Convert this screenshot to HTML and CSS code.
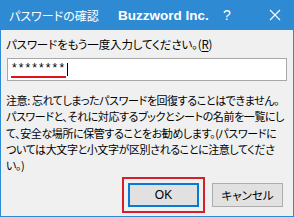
FILE: index.html
```html
<!DOCTYPE html>
<html lang="ja">
<head>
<meta charset="utf-8">
<title>パスワードの確認</title>
<link rel="stylesheet" href="styles.css">
</head>
<body>
<div class="window">
  <div class="titlebar">
    <span class="title">パスワードの確認</span>
    <span class="app">Buzzword Inc.</span>
    <span class="help">?</span>
    <span class="close">
      <svg width="12" height="12" viewBox="0 0 12 12"><path d="M1 1 L11 11 M11 1 L1 11" stroke="#fff" stroke-width="1.1" fill="none"/></svg>
    </span>
  </div>
  <div class="content">
    <div class="label">パスワードをもう一度入力してください。(<u>R</u>)</div>
    <div class="input">
      <span class="mask">********</span><span class="caret"></span>
    </div>
    <p class="note">注意: 忘れてしまったパスワードを回復することはできません。<br>パスワードと、それに対応するブックとシートの名前を一覧にし<br>て、安全な場所に保管することをお勧めします。(パスワードに<br>ついては大文字と小文字が区別されることに注意してくださ<br>い。)</p>
    <div class="buttons">
      <div class="focus-ring"><button class="btn btn-ok">OK</button></div>
      <button class="btn btn-cancel">キャンセル</button>
    </div>
  </div>
</div>
</body>
</html>
```
FILE: styles.css
```css
html, body {
  margin: 0;
  padding: 0;
  background: #f0f0f0;
}
.window {
  width: 294px;
  height: 217px;
  box-sizing: border-box;
  border: 1px solid #2f8ad4;
  border-top: 0;
  background: #f0f0f0;
  display: flex;
  flex-direction: column;
  font-family: "Noto Sans CJK JP", sans-serif;
  font-feature-settings: "palt";
  color: #000;
  overflow: hidden;
}
.titlebar {
  height: 30px;
  flex: none;
  background: #2f8ad4;
  color: #fff;
  display: flex;
  align-items: center;
}
.title {
  margin-left: 8px;
  font-size: 12px;
  width: 109px;
  white-space: nowrap;
}
.app {
  font-family: "Liberation Sans", Arial, sans-serif;
  font-weight: bold;
  font-size: 13.5px;
  width: 105px;
  white-space: nowrap;
}
.help {
  font-family: "Liberation Sans", Arial, sans-serif;
  font-size: 14px;
  width: 46px;
}
.close {
  display: flex;
  align-items: center;
}
.content {
  flex: 1;
  display: flex;
  flex-direction: column;
  padding: 6px 6px 0 5px;
}
.label {
  font-size: 11.5px;
  letter-spacing: -0.15px;
  line-height: 16px;
  white-space: nowrap;
}
.label u {
  text-underline-offset: 2px;
}
.input {
  margin: 6px 0 0 1px;
  height: 23px;
  box-sizing: border-box;
  border: 1px solid #a8a8a8;
  background: #fff;
  display: flex;
  align-items: center;
  padding-left: 3px;
}
.mask {
  font-family: "Liberation Sans", Arial, sans-serif;
  font-size: 12px;
  letter-spacing: 2.1px;
  line-height: 14px;
  height: 15px;
  border-bottom: 2px solid #e0141e;
  padding-left: 1px;
}
.caret {
  width: 1px;
  height: 13px;
  background: #000;
  margin-left: 1px;
}
.note {
  margin: 11px 0 0 0;
  font-size: 11px;
  letter-spacing: -0.4px;
  line-height: 16.3px;
  white-space: nowrap;
}
.buttons {
  margin-top: auto;
  display: flex;
  justify-content: flex-end;
  align-items: center;
  gap: 7px;
  padding: 0 4px 3px 0;
}
.focus-ring {
  border: 2px solid #d3202a;
  padding: 4px;
  display: flex;
}
.btn {
  width: 71px;
  height: 24px;
  box-sizing: border-box;
  background: #e1e1e1;
  font-family: "Noto Sans CJK JP", sans-serif;
  font-feature-settings: "palt";
  font-size: 11.5px;
  color: #000;
  padding: 0;
  margin: 0;
}
.btn-ok {
  border: 2px solid #0a78d5;
  font-family: "Liberation Sans", Arial, sans-serif;
  font-size: 12px;
}
.btn-cancel {
  border: 1px solid #adadad;
}
```
